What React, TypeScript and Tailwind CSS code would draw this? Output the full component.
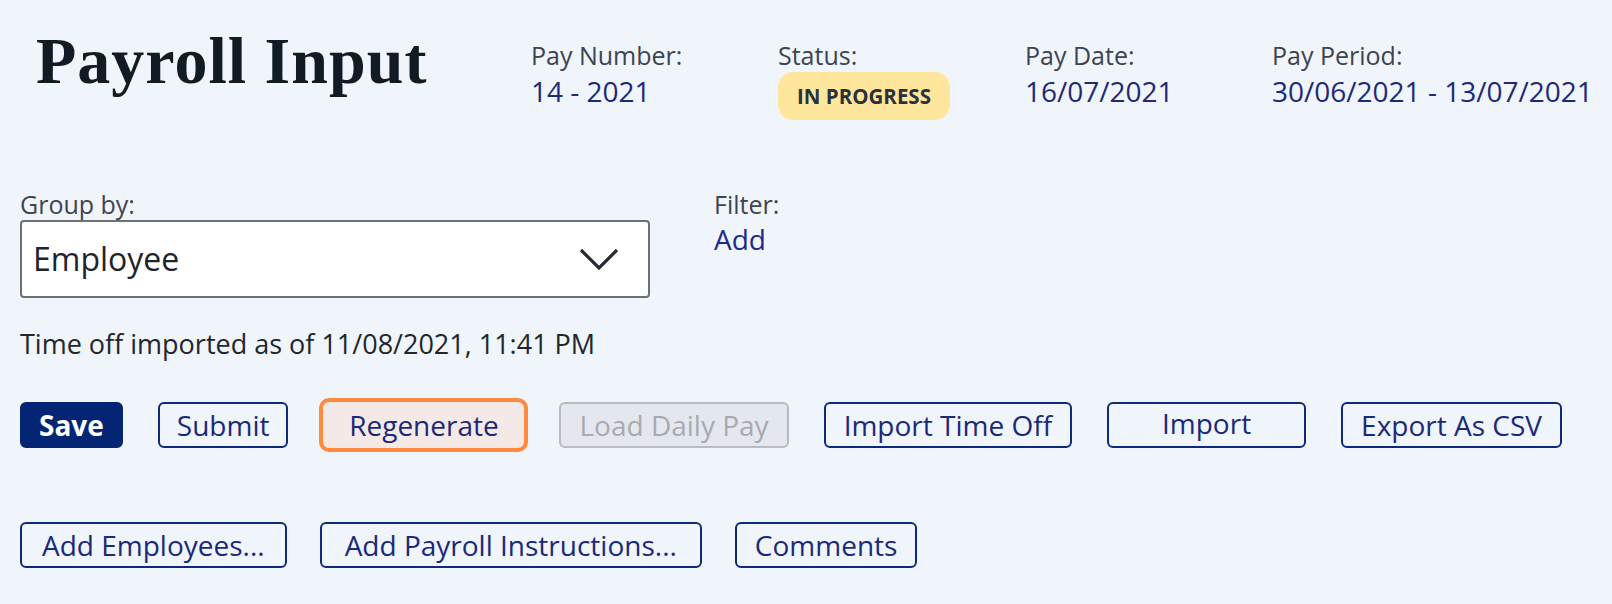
import { ReactNode } from 'react'

const sans = "font-['Open_Sans',_'Noto_Sans',_sans-serif]"

function MetaItem({ label, children }: { label: string; children: ReactNode }) {
  return (
    <div className="w-[247px] shrink-0">
      <div className="text-[25px] leading-[34px] text-[#3d4450]">{label}</div>
      {children}
    </div>
  )
}

function Btn({
  children,
  variant = 'outline',
  className = '',
}: {
  children: ReactNode
  variant?: 'primary' | 'outline' | 'disabled' | 'focused'
  className?: string
}) {
  const styles = {
    primary: 'bg-[#032573] border-[#032573] text-white font-bold',
    outline: 'bg-transparent border-[#0d2a7a] text-[#1b2a78]',
    disabled: 'bg-[#e4e8ee] border-[#b8bcc2] text-[#a7abb1]',
    focused: 'bg-[#f4e9e7] border-[#f4e9e7] text-[#1b2a78] outline-4 outline-[#ff8a3d]',
  }[variant]
  return (
    <button
      className={`h-[46px] rounded-md border-2 flex items-center justify-center text-[28px] leading-none ${styles} ${className || 'px-[17px]'}`}
    >
      {children}
    </button>
  )
}

export default function App() {
  return (
    <div className={`min-h-screen bg-[#f0f4fb] px-5 ${sans}`}>
      {/* header */}
      <div className="flex items-start pt-[28px]">
        <h1 className="ml-[16px] w-[495px] shrink-0 font-['Liberation_Serif',_serif] font-bold text-[66px] leading-none tracking-[1px] text-[#111b24]">
          Payroll Input
        </h1>
        <div className="flex pt-[10px]">
          <MetaItem label="Pay Number:">
            <div className="text-[28px] leading-[38px] text-[#1e2a78]">14 - 2021</div>
          </MetaItem>
          <MetaItem label="Status:">
            <span className="inline-block rounded-[15px] bg-[#fee69c] px-[19px] py-[9px] text-[20.5px] leading-[30px] font-bold text-[#2b313b]">
              IN PROGRESS
            </span>
          </MetaItem>
          <MetaItem label="Pay Date:">
            <div className="text-[28px] leading-[38px] text-[#1e2a78]">16/07/2021</div>
          </MetaItem>
          <MetaItem label="Pay Period:">
            <div className="text-[28px] leading-[38px] text-[#1e2a78] whitespace-nowrap">30/06/2021 - 13/07/2021</div>
          </MetaItem>
        </div>
      </div>

      {/* group by / filter */}
      <div className="flex gap-[64px] mt-[69px]">
        <div>
          <div className="text-[25px] leading-[31px] text-[#3d4450]">Group by:</div>
          <div className="w-[630px] h-[78px] bg-white border-2 border-[#6b7079] rounded flex items-center justify-between pl-[11px] pr-[29px]">
            <span className="text-[32px] text-[#1f242b]">Employee</span>
            <svg width="40" height="23" viewBox="0 0 40 23" fill="none">
              <path d="M2 2 L20 20 L38 2" stroke="#252a33" strokeWidth="3.2" />
            </svg>
          </div>
        </div>
        <div>
          <div className="text-[25px] leading-[31px] text-[#3d4450]">Filter:</div>
          <div className="text-[28px] leading-[38px] text-[#1e2a8a]">Add</div>
        </div>
      </div>

      <p className="mt-[27px] text-[27px] leading-[37px] text-[#22262d]">Time off imported as of 11/08/2021, 11:41 PM</p>

      {/* actions */}
      <div className="flex gap-[35px] mt-[40px]">
        <Btn variant="primary">Save</Btn>
        <Btn>Submit</Btn>
        <Btn variant="focused" className="w-[201px]">Regenerate</Btn>
        <Btn variant="disabled" className="px-[18px]">Load Daily Pay</Btn>
        <Btn className="px-[18px]">Import Time Off</Btn>
        <Btn className="w-[199px] pb-1">Import</Btn>
        <Btn className="px-[18px]">Export As CSV</Btn>
      </div>
      <div className="flex gap-[33px] mt-[74px]">
        <Btn className="px-[20px]">Add Employees...</Btn>
        <Btn className="px-[23px]">Add Payroll Instructions...</Btn>
        <Btn className="px-[18px]">Comments</Btn>
      </div>
    </div>
  )
}
